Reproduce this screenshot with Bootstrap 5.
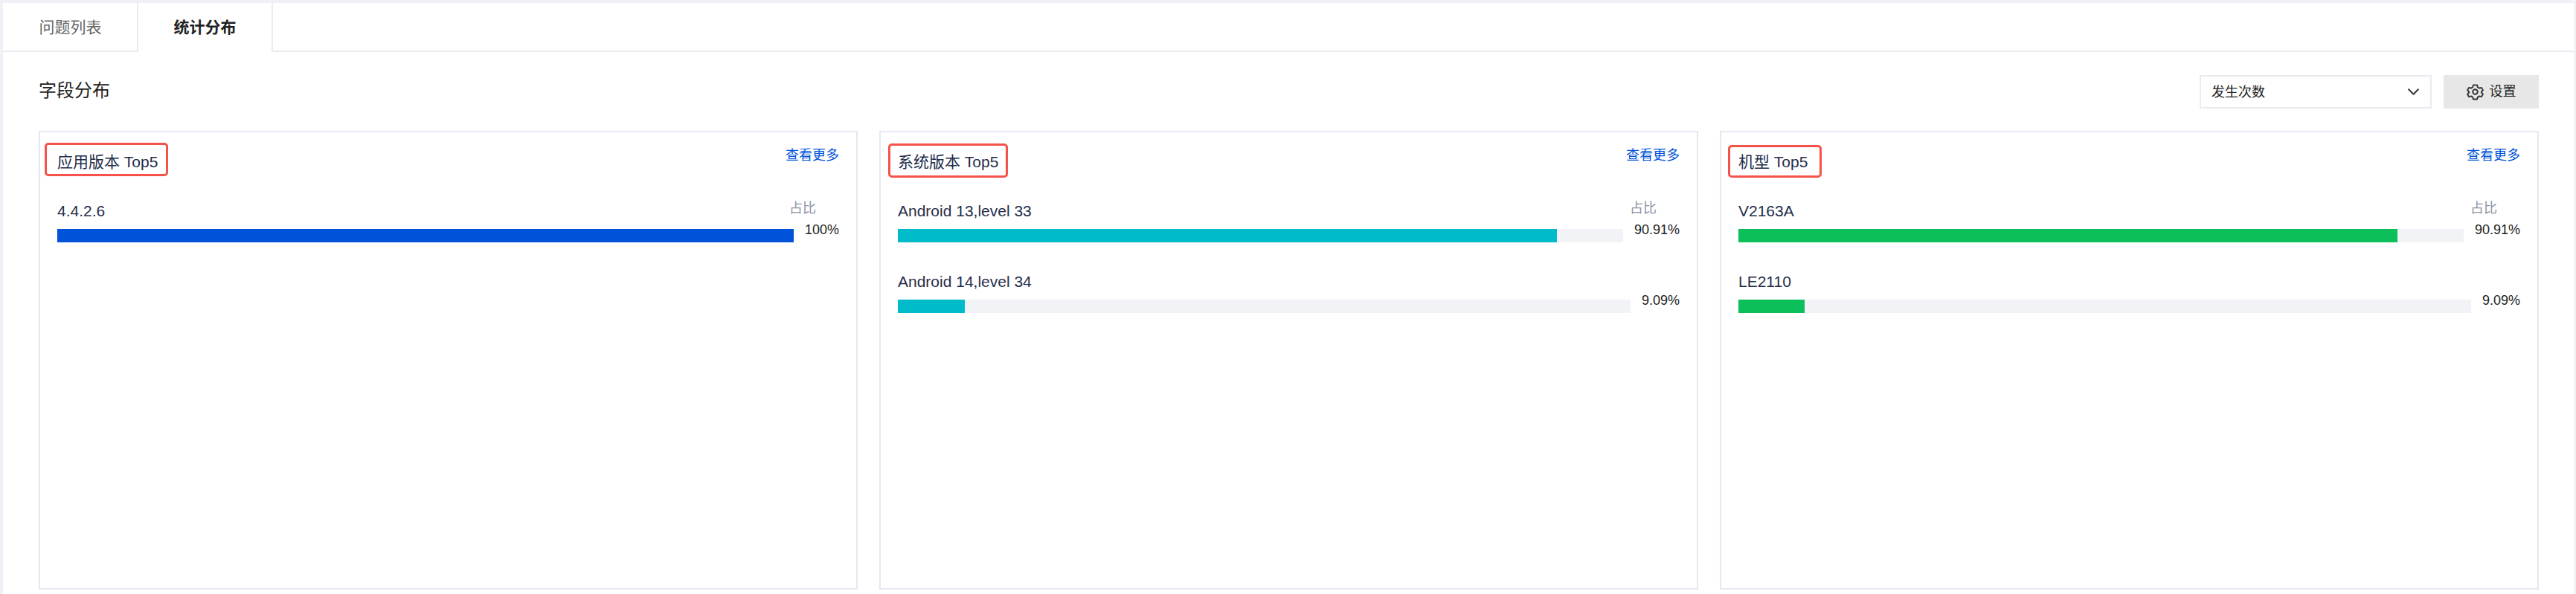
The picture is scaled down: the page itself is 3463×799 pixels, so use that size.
<!DOCTYPE html>
<html lang="zh-CN">
<head>
<meta charset="utf-8">
<title>统计分布</title>
<link rel="stylesheet" href="https://cdn.jsdelivr.net/npm/bootstrap@5.3.0/dist/css/bootstrap.min.css">
<style>
html,body{height:799px;overflow:hidden}
body{background:#fff;font-family:"Liberation Sans","Noto Sans CJK SC",sans-serif;color:#1f2d4a}
.shell{height:799px;background:#f0f1f6;padding:4px 3px 0 4px}
.pane{height:795px;background:#fff}
.tabbar{height:66px;border-bottom:2px solid #e9ebf1}
.tabitem{width:181px;height:66px;font-size:21px;line-height:65px;text-align:center;color:#666;text-decoration:none;display:block}
.tabitem.on{font-weight:700;color:#222;background:#fff;border-left:2px solid #e9ebf1;border-right:2px solid #e9ebf1;width:183px;margin-left:-1px}
.content{padding:0 47px 6px 48px;height:729px}
.headrow{height:106px;padding-top:31px}
.pagetitle{font-size:24px;line-height:45px;color:#222;margin:-2px 0 0;font-weight:400}
.fieldselect{width:312px;height:45px;font-size:18px;line-height:24px;border:2px solid #e9ebf1;border-radius:0;color:#222;padding:8px 40px 8px 14px;background-position:right 14px center;background-size:17px 17px;font-family:inherit}
.setbtn{width:128px;height:45px;background:#e7e7e7;border:0;border-radius:0;font-size:18px;color:#222;padding:0}
.setbtn svg{width:23px;height:23px}
.statrow{--bs-gutter-x:29px;height:617px}
.statcard{height:617px;border:2px solid #e4e8f3;border-radius:0;padding:0 23px}
.cardhead{height:90px}
.cardtitle{font-size:21px;line-height:30px;border:3px solid #f5524a;border-radius:5px;font-weight:400;margin:0;color:#1f2d4a}
.t1{margin:14px 0 0 -17px;padding:8px 11px 1px 14px}
.t2{margin:15px 0 0 -13px;padding:7px 10px 3px 10px}
.t3{margin:17px 0 0 -14px;padding:5px 16px 3px 11px}
.morelink{font-size:18px;line-height:27px;margin-top:18px;color:#0052d9;text-decoration:none}
.statitem{margin-bottom:37px}
.nameline{height:40px;padding-top:1px;font-size:21px;line-height:30px;white-space:nowrap}
.sharelabel{font-size:18px;line-height:18px;color:#8b92a3;margin:2px 31px 0 0}
.barline{height:18px}
.track{background:#f2f3f7;height:18px}
.fill{height:18px}
.fill-blue{background:#0052d9}
.fill-teal{background:#00bbca}
.fill-green{background:#0cbf5b}
.pct{font-size:18px;line-height:18px;color:#222;margin:-8px 0 0 15px}
</style>
</head>
<body>
<div class="shell">
  <div class="pane">
    <div class="tabbar d-flex">
      <a class="tabitem" href="#">问题列表</a>
      <a class="tabitem on" href="#">统计分布</a>
    </div>
    <div class="content">
      <div class="headrow d-flex justify-content-between align-items-start">
        <h2 class="pagetitle">字段分布</h2>
        <div class="d-flex gap-3">
          <select class="form-select fieldselect"><option>发生次数</option></select>
          <button class="btn setbtn d-flex align-items-center justify-content-center gap-2" type="button">
            <svg viewBox="0 0 24 24" fill="none" stroke="#333" stroke-width="2" stroke-linejoin="round"><circle cx="12" cy="12" r="3.4"/><path d="M9.3 2.5h5.4l.8 3 2.4 1.4 3-.8 2 3.7-2.2 2.2v1l2.2 2.2-2 3.7-3-.8-2.4 1.4-.8 3H9.3l-.8-3-2.400-1.400-3 .8-2-3.700 2.200-2.200v-1L1.100 9.800l2-3.700 3 .8 2.400-1.400z"/></svg>
            <span>设置</span>
          </button>
        </div>
      </div>
      <div class="row statrow">
        <div class="col-4">
          <div class="card statcard">
            <div class="cardhead d-flex justify-content-between align-items-start">
              <h3 class="cardtitle t1">应用版本 Top5</h3>
              <a class="morelink" href="#">查看更多</a>
            </div>
            <div class="statitem">
              <div class="nameline d-flex justify-content-between"><span>4.4.2.6</span><span class="sharelabel">占比</span></div>
              <div class="barline d-flex"><div class="track flex-grow-1"><div class="fill fill-blue" style="width:100%"></div></div><span class="pct">100%</span></div>
            </div>
          </div>
        </div>
        <div class="col-4">
          <div class="card statcard">
            <div class="cardhead d-flex justify-content-between align-items-start">
              <h3 class="cardtitle t2">系统版本 Top5</h3>
              <a class="morelink" href="#">查看更多</a>
            </div>
            <div class="statitem">
              <div class="nameline d-flex justify-content-between"><span>Android 13,level 33</span><span class="sharelabel">占比</span></div>
              <div class="barline d-flex"><div class="track flex-grow-1"><div class="fill fill-teal" style="width:90.91%"></div></div><span class="pct">90.91%</span></div>
            </div>
            <div class="statitem">
              <div class="nameline d-flex justify-content-between"><span>Android 14,level 34</span></div>
              <div class="barline d-flex"><div class="track flex-grow-1"><div class="fill fill-teal" style="width:9.09%"></div></div><span class="pct">9.09%</span></div>
            </div>
          </div>
        </div>
        <div class="col-4">
          <div class="card statcard">
            <div class="cardhead d-flex justify-content-between align-items-start">
              <h3 class="cardtitle t3">机型 Top5</h3>
              <a class="morelink" href="#">查看更多</a>
            </div>
            <div class="statitem">
              <div class="nameline d-flex justify-content-between"><span>V2163A</span><span class="sharelabel">占比</span></div>
              <div class="barline d-flex"><div class="track flex-grow-1"><div class="fill fill-green" style="width:90.91%"></div></div><span class="pct">90.91%</span></div>
            </div>
            <div class="statitem">
              <div class="nameline d-flex justify-content-between"><span>LE2110</span></div>
              <div class="barline d-flex"><div class="track flex-grow-1"><div class="fill fill-green" style="width:9.09%"></div></div><span class="pct">9.09%</span></div>
            </div>
          </div>
        </div>
      </div>
    </div>
  </div>
</div>
<script src="https://cdn.jsdelivr.net/npm/bootstrap@5.3.0/dist/js/bootstrap.bundle.min.js"></script>
</body>
</html>
